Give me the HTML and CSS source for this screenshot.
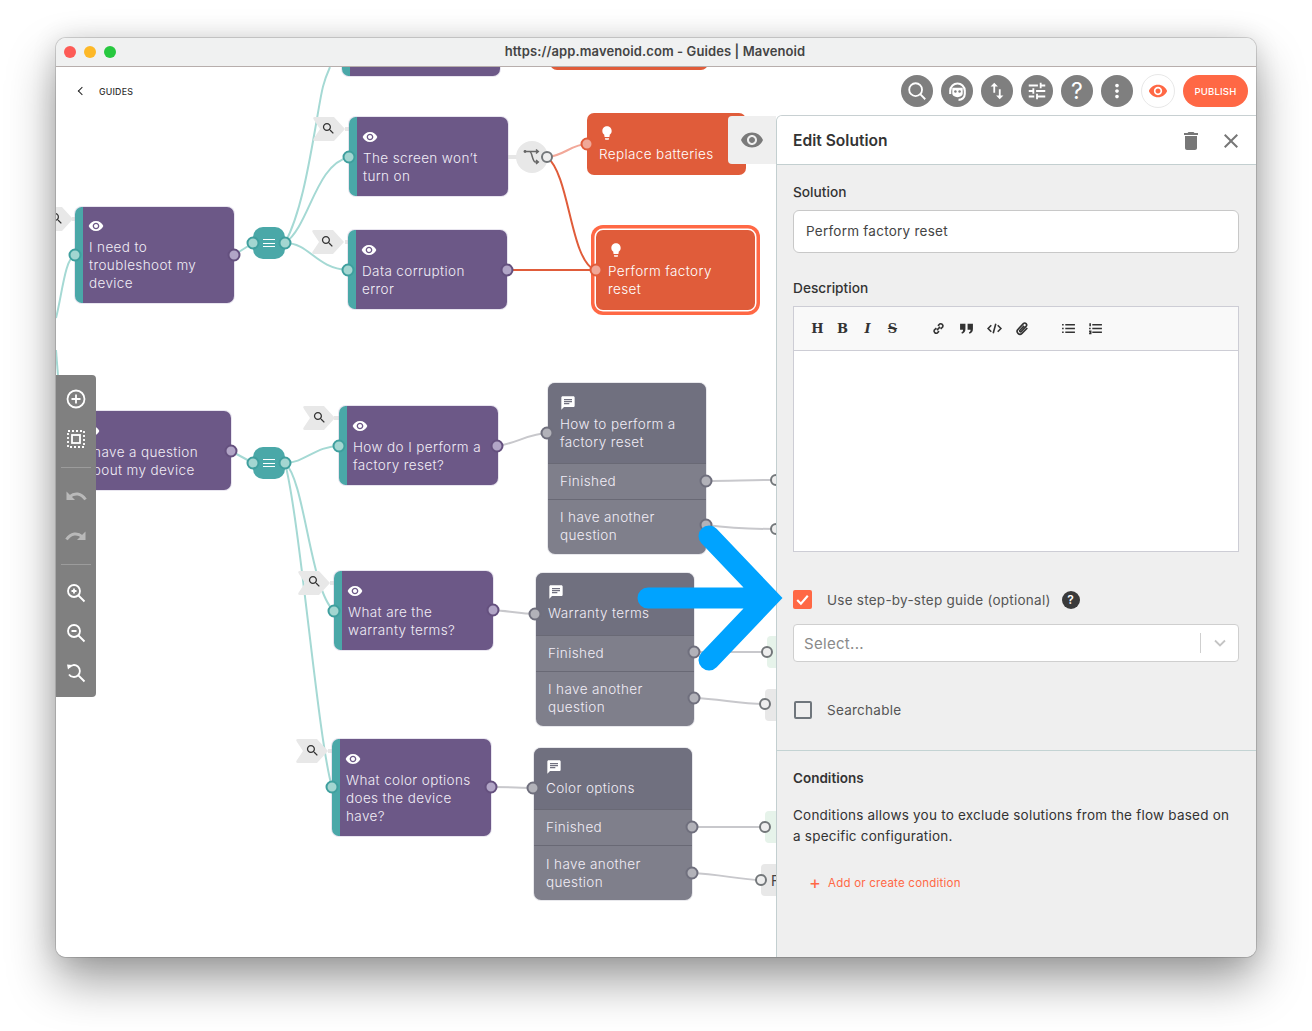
FILE: index.html
```html
<!DOCTYPE html>
<html lang="en">
<head>
<meta charset="utf-8">
<title>Guides | Mavenoid</title>
<link rel="stylesheet" href="styles.css">
</head>
<body>
<svg class="defs" width="0" height="0" aria-hidden="true">
  <symbol id="i-eye" viewBox="0 0 24 24"><path d="M12 4.5C7 4.5 2.73 7.61 1 12c1.73 4.39 6 7.5 11 7.5s9.27-3.11 11-7.5c-1.73-4.39-6-7.5-11-7.5zM12 17c-2.76 0-5-2.24-5-5s2.24-5 5-5 5 2.24 5 5-2.24 5-5 5zm0-8c-1.66 0-3 1.34-3 3s1.34 3 3 3 3-1.34 3-3-1.34-3-3-3z"/></symbol>
  <symbol id="i-bulb" viewBox="0 0 24 24"><path d="M9 21c0 .55.45 1 1 1h4c.55 0 1-.45 1-1v-1H9v1zm3-19C8.14 2 5 5.14 5 9c0 2.38 1.19 4.47 3 5.74V17c0 .55.45 1 1 1h6c.55 0 1-.45 1-1v-2.26c1.81-1.27 3-3.36 3-5.74 0-3.86-3.14-7-7-7z"/></symbol>
  <symbol id="i-chat" viewBox="0 0 24 24"><path d="M20 2H4c-1.1 0-1.99.9-1.99 2L2 22l4-4h14c1.1 0 2-.9 2-2V4c0-1.1-.9-2-2-2zM6 9h12v2H6V9zm8 5H6v-2h8v2zm4-6H6V6h12v2z"/></symbol>
  <symbol id="i-search" viewBox="0 0 24 24"><path d="M15.5 14h-.79l-.28-.27C15.41 12.59 16 11.11 16 9.5 16 5.91 13.09 3 9.5 3S3 5.91 3 9.5 5.91 16 9.5 16c1.61 0 3.09-.59 4.23-1.57l.27.28v.79l5 4.99L20.49 19l-4.99-5zm-6 0C7.01 14 5 11.99 5 9.5S7.01 5 9.5 5 14 7.01 14 9.5 11.99 14 9.5 14z"/></symbol>
  <symbol id="i-tag" viewBox="0 0 32 24"><path d="M2 0H21L32 12L21 24H2Q-1 24 1 21L7 12L1 3Q-1 0 2 0Z"/></symbol>
</svg>

<div class="window">
  <header class="titlebar">
    <div class="lights"><span class="light red"></span><span class="light amber"></span><span class="light green"></span></div>
    <div class="title">https://app.mavenoid.com - Guides | Mavenoid</div>
  </header>

  <div class="main">
    <section class="canvas">
      <svg class="layer" viewBox="56 67 720 890" width="720" height="890" aria-hidden="true">
        <g class="edge-teal">
          <path d="M285 243C300 215 308 170 315 130S322 85 330 67"/>
          <path d="M285 243C310 225 315 165 349 157"/>
          <path d="M285 243C310 243 315 268 348 270"/>
          <path d="M234 255L253 243"/>
          <path d="M75 255C65 258 62 295 56 318"/>
          <path d="M58 376L56 350"/>
          <path d="M231 451L253 463"/>
          <path d="M285 463C305 463 315 446 340 446"/>
          <path d="M285 463C305 480 310 590 334 611"/>
          <path d="M285 463C300 520 318 740 332 787"/>
        </g>
        <g class="edge-grey">
          <path d="M497 446C515 444 530 433 548 433"/>
          <path d="M493 610C510 611 520 614 536 614"/>
          <path d="M491 787C510 787 520 788 534 788"/>
          <path d="M706 481C730 481 750 480 776 480"/>
          <path d="M706 525C730 528 750 529 776 529"/>
          <path d="M694 652L767 652"/>
          <path d="M694 698C720 699 740 704 765 704"/>
          <path d="M692 827L765 827"/>
          <path d="M692 873C720 874 740 880 761 880"/>
          <path class="thick" d="M506 157L520 157"/>
        </g>
        <path class="edge-salmon" d="M547 157C562 157 572 144 587 144"/>
        <path class="edge-orange" d="M547 157C570 175 570 260 595 270"/>
        <path class="edge-orange" d="M507 270L595 270"/>
        <g class="tag-line">
          <path d="M72 219H75M345 129H349M345 242H348M334 418H339M330 583H334M328 751H332"/>
        </g>
        <g class="tag">
          <use href="#i-tag" x="41" y="207" width="32" height="24"/>
          <use href="#i-tag" x="313" y="117" width="32" height="24"/>
          <use href="#i-tag" x="312" y="230" width="32" height="24"/>
          <use href="#i-tag" x="303" y="406" width="32" height="24"/>
          <use href="#i-tag" x="298" y="571" width="32" height="24"/>
          <use href="#i-tag" x="296" y="739" width="32" height="24"/>
        </g>
        <g class="tag-icon">
          <use href="#i-search" x="49" y="211" width="15" height="15"/>
          <use href="#i-search" x="321" y="121" width="15" height="15"/>
          <use href="#i-search" x="320" y="234" width="15" height="15"/>
          <use href="#i-search" x="312" y="410" width="15" height="15"/>
          <use href="#i-search" x="307" y="574" width="15" height="15"/>
          <use href="#i-search" x="305" y="743" width="15" height="15"/>
        </g>
        <circle class="switch-bg" cx="532" cy="157" r="16"/>
        <g class="switch-icon">
          <path d="M525 151.500H529.500C532.500 151.500 532 162 535.500 162H538M529.500 151.500H538M536 149.500L538.300 151.500L536 153.500M536 160L538.300 162L536 164"/>
          <circle cx="525" cy="151.500" r="1.400"/>
        </g>
        <rect class="stub-green" x="767" y="636" width="12" height="32" rx="4"/>
        <rect class="stub-grey" x="765" y="689" width="14" height="32" rx="4"/>
        <rect class="stub-green" x="765" y="811" width="14" height="32" rx="4"/>
        <rect class="stub-grey" x="761" y="864" width="18" height="32" rx="4"/>
      </svg>

      <div class="stub-letter">F</div>

      <div class="node purple frag-top"></div>
      <div class="node orange frag-orange"></div>

      <article class="node purple n-a"><svg class="ico"><use href="#i-eye"/></svg><p>I need to troubleshoot my device</p></article>
      <article class="node purple n-b"><svg class="ico"><use href="#i-eye"/></svg><p>The screen won’t turn on</p></article>
      <article class="node purple n-c"><svg class="ico"><use href="#i-eye"/></svg><p>Data corruption error</p></article>
      <article class="node purple n-d"><svg class="ico"><use href="#i-eye"/></svg><p>I have a question about my device</p></article>
      <article class="node purple n-e"><svg class="ico"><use href="#i-eye"/></svg><p>How do I perform a factory reset?</p></article>
      <article class="node purple n-f"><svg class="ico"><use href="#i-eye"/></svg><p>What are the warranty terms?</p></article>
      <article class="node purple n-g"><svg class="ico"><use href="#i-eye"/></svg><p>What color options does the device have?</p></article>

      <article class="node orange n-replace"><svg class="ico"><use href="#i-bulb"/></svg><p>Replace batteries</p></article>
      <article class="node orange n-reset"><svg class="ico"><use href="#i-bulb"/></svg><p>Perform factory reset</p></article>

      <article class="node grey n-h">
        <div class="g-head"><svg class="ico"><use href="#i-chat"/></svg><p>How to perform a factory reset</p></div>
        <div class="g-row">Finished</div>
        <div class="g-row tall">I have another question</div>
      </article>
      <article class="node grey n-i">
        <div class="g-head"><svg class="ico"><use href="#i-chat"/></svg><p>Warranty terms</p></div>
        <div class="g-row">Finished</div>
        <div class="g-row tall">I have another question</div>
      </article>
      <article class="node grey n-j">
        <div class="g-head"><svg class="ico"><use href="#i-chat"/></svg><p>Color options</p></div>
        <div class="g-row">Finished</div>
        <div class="g-row tall">I have another question</div>
      </article>

      <div class="hub h-1"><span class="bars"></span></div>
      <div class="hub h-2"><span class="bars"></span></div>

      <svg class="layer" viewBox="56 67 720 890" width="720" height="890" aria-hidden="true">
        <g class="p-teal">
          <circle cx="75" cy="255" r="5.500"/><circle cx="349" cy="157" r="5.500"/><circle cx="348" cy="270" r="5.500"/>
          <circle cx="253" cy="243" r="5.500"/><circle cx="285" cy="243" r="5.500"/>
          <circle cx="253" cy="463" r="5.500"/><circle cx="285" cy="463" r="5.500"/>
          <circle cx="339" cy="446" r="5.500"/><circle cx="334" cy="611" r="5.500"/><circle cx="332" cy="787" r="5.500"/>
        </g>
        <g class="p-purple">
          <circle cx="234" cy="255" r="5.500"/><circle cx="507" cy="270" r="5.500"/>
          <circle cx="231" cy="451" r="5.500"/><circle cx="497" cy="446" r="5.500"/><circle cx="493" cy="610" r="5.500"/><circle cx="491" cy="787" r="5.500"/>
        </g>
        <g class="p-grey">
          <circle cx="547" cy="433" r="5.500"/><circle cx="706" cy="481" r="5.500"/><circle cx="706" cy="525" r="5.500"/>
          <circle cx="535" cy="614" r="5.500"/><circle cx="694" cy="652" r="5.500"/><circle cx="694" cy="698" r="5.500"/>
          <circle cx="533" cy="788" r="5.500"/><circle cx="692" cy="827" r="5.500"/><circle cx="692" cy="873" r="5.500"/>
        </g>
        <g class="p-orange">
          <circle cx="587" cy="144" r="5.500"/><circle cx="596" cy="270" r="5.500"/>
        </g>
        <g class="p-ring">
          <circle cx="547" cy="157" r="5"/><circle cx="767" cy="652" r="5"/><circle cx="765" cy="704" r="5"/>
          <circle cx="765" cy="827" r="5"/><circle cx="761" cy="880" r="5"/><circle cx="776" cy="480" r="5"/><circle cx="776" cy="529" r="5"/>
        </g>
      </svg>

      <div class="guides"><span class="back"></span><span>GUIDES</span></div>

      <div class="preview-tab"><svg><use href="#i-eye"/></svg></div>

      <nav class="tools">
        <svg viewBox="0 0 24 24"><circle cx="12" cy="12" r="8.500"/><path d="M12 7.500v9M7.500 12h9"/></svg>
        <svg viewBox="0 0 24 24"><rect x="4" y="4" width="16" height="16" stroke-dasharray="2 2"/><rect x="8" y="8" width="8" height="8"/></svg>
        <hr>
        <svg class="dim" viewBox="0 0 24 24"><path class="solid" d="M2.500 7.500V16H11Z"/><path class="wide" d="M6 12.500C10.500 8.500 17 9 21.500 15.500"/></svg>
        <svg class="dim" viewBox="0 0 24 24"><path class="solid" d="M21.500 7.500V16H13Z"/><path class="wide" d="M18 12.500C13.500 8.500 7 9 2.500 15.500"/></svg>
        <hr>
        <svg viewBox="0 0 24 24"><circle cx="10" cy="10" r="6"/><path d="M14.500 14.500L20.500 20.500M7.500 10h5M10 7.500v5"/></svg>
        <svg viewBox="0 0 24 24"><circle cx="10" cy="10" r="6"/><path d="M14.500 14.500L20.500 20.500M7.500 10h5"/></svg>
        <svg viewBox="0 0 24 24"><path d="M5 6.500A6 6 0 1 1 5 13.500M14.500 14.500L20.500 20.500"/><path class="solid" d="M3 3.500L8.500 4L4 8.500Z"/></svg>
      </nav>
    </section>

    <aside class="side">
      <div class="topbar">
        <button class="round"><svg viewBox="0 0 24 24"><circle class="st" cx="10.500" cy="10.500" r="7"/><path class="st" d="M15.500 15.500L21 21"/></svg></button>
        <button class="round head"><svg viewBox="0 0 24 24"><path class="st" d="M5 11.500C5 2 19 2 19 11.500M5 10.500v4M19 10.500v4C19 18 16 20 13 20"/><path class="fillw" d="M7 8.500h10v5.500c0 2-2 3.500-5 3.500s-5-1.500-5-3.500z"/><circle class="dark" cx="10" cy="12" r="1.200"/><circle class="dark" cx="14" cy="12" r="1.200"/></svg></button>
        <button class="round"><svg viewBox="0 0 24 24"><path class="fillw" d="M16 17.010V10h-2v7.010h-3L15 21l4-3.990h-3zM9 3L5 6.990h3V14h2V6.990h3L9 3z"/></svg></button>
        <button class="round"><svg viewBox="0 0 24 24"><path class="fillw" d="M3 17v2h6v-2H3zM3 5v2h10V5H3zm10 16v-2h8v-2h-8v-2h-2v6h2zM7 9v2H3v2h4v2h2V9H7zm14 4v-2H11v2h10zm-6-4h2V7h4V5h-4V3h-2v6z"/></svg></button>
        <button class="round q">?</button>
        <button class="round"><svg viewBox="0 0 24 24"><path class="fillw" d="M12 8c1.100 0 2-.9 2-2s-.9-2-2-2-2 .9-2 2 .9 2 2 2zm0 2c-1.100 0-2 .9-2 2s.9 2 2 2 2-.9 2-2-.9-2-2-2zm0 6c-1.100 0-2 .9-2 2s.9 2 2 2 2-.9 2-2-.9-2-2-2z"/></svg></button>
        <button class="round live"><svg><use href="#i-eye"/></svg></button>
        <button class="publish">PUBLISH</button>
      </div>

      <div class="panel">
        <div class="panel-head">
          <h2>Edit Solution</h2>
          <svg class="trash" viewBox="0 0 24 24"><path d="M6 19c0 1.100.9 2 2 2h8c1.100 0 2-.9 2-2V7H6v12zM19 4h-3.500l-1-1h-5l-1 1H5v2h14V4z"/></svg>
          <svg class="close" viewBox="0 0 24 24"><path d="M19 6.410L17.590 5 12 10.590 6.410 5 5 6.410 10.590 12 5 17.590 6.410 19 12 13.410 17.590 19 19 17.590 13.410 12z"/></svg>
        </div>

        <div class="form">
          <label class="lbl">Solution</label>
          <div class="input">Perform factory reset</div>

          <label class="lbl lbl-desc">Description</label>
          <div class="editor">
            <div class="ed-tools">
              <div class="ed-group g1"><b class="slab">H</b><b class="slab">B</b><i class="slab">I</i><s class="slab">S</s></div>
              <div class="ed-group g2">
                <svg viewBox="0 0 14 14"><path class="ln" d="M5.500 8.500L8.500 5.500M5 6.500L3 8.500A2.100 2.100 0 0 0 5.800 11.200L7.500 9.500M9 7.500L11 5.500A2.100 2.100 0 0 0 8.200 2.800L6.500 4.500"/></svg>
                <svg viewBox="0 0 14 14"><path d="M1 2.500H6V7.500C6 9.800 5 11.300 2.800 12L2.200 10.800C3.300 10.300 3.800 9.500 3.800 8.200H1ZM8 2.500H13V7.500C13 9.800 12 11.300 9.800 12L9.200 10.800C10.300 10.300 10.800 9.500 10.800 8.200H8Z"/></svg>
                <svg viewBox="0 0 14 14"><path class="ln" d="M4 4L1 7L4 10M10 4L13 7L10 10M8.200 2.500L5.800 11.500"/></svg>
                <svg viewBox="0 0 14 14"><path class="ln" d="M11.500 6.500L6.500 11.500A2.500 2.500 0 0 1 2.800 7.800L7.800 2.500A1.700 1.700 0 0 1 10.300 5L5.800 9.800A.8.800 0 0 1 4.600 8.600L8.500 4.500"/></svg>
              </div>
              <div class="ed-group g3">
                <svg viewBox="0 0 14 14"><path class="ln" d="M4 3.500H13M4 7H13M4 10.500H13M1 3.500H2.500M1 7H2.500M1 10.500H2.500"/></svg>
                <svg viewBox="0 0 14 14"><path class="ln" d="M4 3.500H13M4 7H13M4 10.500H13M2 2V5M1 7H2.500M1 9.500H2.500V11.500H1"/></svg>
              </div>
            </div>
            <div class="ed-body"></div>
          </div>

          <div class="check-row first">
            <span class="box on"><svg viewBox="0 0 18 18"><path d="M4 9.500L7.500 13L14 5.500"/></svg></span>
            <span>Use step-by-step guide (optional)</span>
            <span class="help">?</span>
          </div>

          <div class="select">
            <span class="ph">Select...</span>
            <span class="sep"></span>
            <svg viewBox="0 0 14 14"><path d="M2 4.500L7 9.500L12 4.500"/></svg>
          </div>

          <div class="check-row second">
            <span class="box"></span>
            <span>Searchable</span>
          </div>
        </div>

        <div class="conditions">
          <h3>Conditions</h3>
          <p>Conditions allows you to exclude solutions from the flow based on a specific configuration.</p>
          <div class="add"><span class="plus">+</span>Add or create condition</div>
        </div>
      </div>
    </aside>

    <svg class="arrow" viewBox="0 0 1312 1031" width="1312" height="1031" aria-hidden="true">
      <path d="M648 598H760M709 536L768 598L709 660"/>
    </svg>
  </div>
</div>
</body>
</html>
```

FILE: styles.css
```css
* { box-sizing: border-box; }
html, body { margin: 0; height: 100%; }
body {
  background: #fff;
  font-family: Inter, "Noto Sans", sans-serif;
  color: #333;
  overflow: hidden;
  padding: 38px 56px 0;
}
.defs { position: absolute; }
p { margin: 0; }

.window {
  width: 1200px;
  height: 919px;
  border-radius: 10px;
  background: #fff;
  box-shadow: 0 24px 48px rgba(0,0,0,.38), 0 0 26px rgba(0,0,0,.12), 0 0 0 1px rgba(0,0,0,.14);
  display: flex;
  flex-direction: column;
  overflow: hidden;
  position: relative;
}

.titlebar {
  height: 29px;
  flex: none;
  background: #f0f1f1;
  border-bottom: 1px solid #b7aeac;
  position: relative;
  display: flex;
  align-items: center;
  justify-content: center;
  padding: 0 2px 2px 0;
}
.lights { position: absolute; left: 8px; top: 8px; display: flex; gap: 8px; }
.light { width: 12px; height: 12px; border-radius: 50%; }
.red { background: #fd5b56; }
.amber { background: #fdb827; }
.green { background: #27c83f; }
.title { font-size: 13px; font-weight: 600; letter-spacing: .1px; color: #444; }

.main { flex: 1; display: flex; position: relative; min-height: 0; }

.canvas { width: 720px; height: 890px; position: relative; overflow: hidden; flex: none; background: #fff; }
.layer { position: absolute; left: 0; top: 0; display: block; pointer-events: none; }

.edge-teal path { fill: none; stroke: #a5d9d4; stroke-width: 2; }
.edge-grey path { fill: none; stroke: #c8c8cc; stroke-width: 2; }
.edge-grey path.thick { stroke: #e6e6e6; stroke-width: 4; }
.edge-salmon { fill: none; stroke: #f2a899; stroke-width: 2; }
.edge-orange { fill: none; stroke: #e05c3a; stroke-width: 2; }
.tag-line path { fill: none; stroke: #e6e6e6; stroke-width: 4; }
.tag { fill: #e8e8e8; }
.tag-icon { fill: #333; }
.switch-bg { fill: #e8e8e8; }
.switch-icon path { fill: none; stroke: #666; stroke-width: 1.500; }
.switch-icon circle { fill: #666; }
.stub-green { fill: #e6f3ea; }
.stub-grey { fill: #e8e8e8; }
.stub-letter { position: absolute; left: 715px; top: 805px; font-size: 14px; color: #444; }

.p-teal circle { fill: #a3d6d1; stroke: #3f9f9e; stroke-width: 2; }
.p-purple circle { fill: #b1a5c6; stroke: #64507e; stroke-width: 2; }
.p-grey circle { fill: #b2b2b9; stroke: #6f6f7d; stroke-width: 2; }
.p-orange circle { fill: #f0a898; stroke: #e05c3a; stroke-width: 2; }
.p-ring circle { fill: #eee; stroke: #73777a; stroke-width: 2; }

.node {
  position: absolute;
  width: 159px;
  border-radius: 7px;
  font-size: 13.5px;
  font-weight: 300;
  line-height: 18px;
  letter-spacing: .38px;
  color: #f1edf6;
  overflow: hidden;
}
.node .ico { display: block; width: 16px; height: 16px; fill: currentColor; margin: -1px 0 4px; color: #fff; }
.purple .ico { margin-left: -1px; }

.purple { background: #6c5887; padding: 13px 10px 11px 6px; border-left: 8px solid #4aa8a8; box-shadow: 0 0 0 1px rgba(190,180,210,.35); }
.orange { background: #e05c3a; padding: 13px 12px 12px; color: #fff; }
.grey { background: #7f7f8b; padding: 0; width: 158px; box-shadow: 0 0 0 1px rgba(190,190,200,.35); }

.frag-top { left: 286px; top: -40px; width: 158px; height: 49px; }
.frag-orange { left: 494px; top: -40px; width: 158px; height: 43px; }
.n-a { left: 19px; top: 140px; height: 96px; padding-top: 12px; }
.n-b { left: 293px; top: 50px; }
.n-c { left: 292px; top: 163px; }
.n-d { left: 19px; top: 344px; width: 156px; padding-left: 2px; }
.n-e { left: 283px; top: 339px; }
.n-f { left: 278px; top: 504px; }
.n-g { left: 276px; top: 672px; height: 97px; }
.n-replace { left: 531px; top: 46px; }
.n-reset {
  left: 540px; top: 163px; overflow: visible;
  box-shadow: 0 0 0 1.5px #fff, 0 0 0 5px #ff6845;
}
.n-h { left: 492px; top: 316px; }
.n-h .g-head { padding: 13px 12px 12px; }
.n-i { left: 480px; top: 506px; }
.n-i .g-head { padding-bottom: 13px; }
.n-j { left: 478px; top: 681px; }
.n-j .g-row.tall { padding-top: 9px; }

.g-head { background: #70707f; padding: 12px 12px 12px; }
.g-row { padding: 8px 12px; height: 36px; border-top: 1px solid #696975; }
.g-row.tall { height: 55px; }

.hub { position: absolute; width: 32px; height: 32px; border-radius: 10px; background: #4aa8a8; display: flex; align-items: center; justify-content: center; }
.h-1 { left: 197px; top: 160px; }
.h-2 { left: 197px; top: 380px; }
.bars { width: 12px; height: 8px; border-top: 1px solid #fff; border-bottom: 1px solid #fff; position: relative; display: block; }
.bars::after { content: ""; position: absolute; left: 0; right: 0; top: 2.500px; height: 1px; background: #fff; }

.guides { position: absolute; left: 21px; top: 15px; height: 18px; display: flex; align-items: center; gap: 14px; font-size: 8.800px; font-weight: 500; letter-spacing: .2px; color: #333; }
.back { width: 6px; height: 6px; border-left: 1.500px solid #222; border-bottom: 1.500px solid #222; transform: rotate(45deg); margin-left: 2px; }

.preview-tab { position: absolute; left: 672px; top: 49px; width: 48px; height: 48px; background: #efefef; border-radius: 4px 0 0 4px; display: flex; align-items: center; justify-content: center; fill: #7a7a7a; }
.preview-tab svg { width: 24px; height: 24px; }

.tools { position: absolute; left: 0; top: 308px; width: 40px; height: 322px; background: #808080; border-radius: 0 4px 4px 0; display: flex; flex-direction: column; align-items: center; padding-top: 12px; }
.tools svg { width: 24px; height: 24px; margin-bottom: 16px; fill: none; stroke: #fff; stroke-width: 1.800; flex: none; }
.tools svg .solid { fill: #fff; stroke: none; }
.tools svg .wide { stroke-width: 3; }
.tools svg.dim { opacity: .45; }
.tools hr { width: 30px; margin: 0 0 16px; border: 0; border-top: 1px solid #9c9c9c; flex: none; }

.side { width: 480px; height: 890px; display: flex; flex-direction: column; flex: none; }
.topbar { height: 48px; flex: none; display: flex; align-items: center; justify-content: flex-end; gap: 8px; padding: 0 8px 0 0; }
.round { width: 32px; height: 32px; border-radius: 50%; background: #7f7f7f; border: 0; padding: 0; display: flex; align-items: center; justify-content: center; flex: none; }
.round svg { width: 22px; height: 22px; }
.head svg { width: 25px; height: 25px; }
.st { fill: none; stroke: #fff; stroke-width: 2; }
.fillw { fill: #fff; }
.dark { fill: #7f7f7f; }
.q { color: #fff; font: 400 23px/32px Inter, sans-serif; }
.live { width: 34px; height: 34px; background: #fff; border: 1px solid #e8e8e8; fill: #ff6845; }
.live svg { width: 20px; height: 20px; }
.publish { width: 65px; height: 32px; border: 0; border-radius: 16px; background: #ff6845; color: #fff; font: 500 9.500px Inter, sans-serif; letter-spacing: .2px; padding: 0; }

.panel { flex: 1; background: #efefef; border-left: 1px solid #c3cfd0; border-top: 1px solid #c8d0d2; border-top-left-radius: 6px; overflow: hidden; display: flex; flex-direction: column; }
.panel-head { height: 49px; background: #fff; border-bottom: 1px solid #c3cfd0; display: flex; align-items: center; padding: 1px 13px 0 16px; flex: none; }
.panel-head h2 { margin: 0; font-size: 15.600px; font-weight: 600; color: #333; flex: 1; }
.trash { width: 24px; height: 24px; fill: #777; margin-right: 16px; }
.close { width: 24px; height: 24px; fill: #777; }

.form { padding: 18px 17px 0 16px; height: 586px; border-bottom: 1px solid #c3d3d3; flex: none; }
.lbl { display: block; font-size: 13.700px; font-weight: 500; line-height: 18px; color: #333; }
.lbl-desc { margin-top: 26px; }
.input { height: 43px; margin-top: 9px; background: #fff; border: 1px solid #c8c8c8; border-radius: 6px; padding: 0 12px; font-size: 13.500px; line-height: 41px; letter-spacing: .25px; color: #444; }
.editor { margin-top: 9px; height: 246px; background: #fff; border: 1px solid #cdcdd5; }
.ed-tools { height: 44px; background: #f9f9f9; border-bottom: 1px solid #cdcdd5; display: flex; align-items: center; padding-left: 17px; }
.ed-group { display: flex; align-items: center; }
.ed-group svg { width: 15px; height: 15px; fill: #333; flex: none; }
.ln { fill: none; stroke: #333; stroke-width: 1.500; }
.slab { font: 700 13px/14px "DejaVu Serif", serif; color: #333; width: 13px; text-align: center; }
i.slab { font-style: italic; font-weight: 700; }
s.slab { font-weight: 700; }
.g1 { gap: 12px; }
.g2 { gap: 13px; margin-left: 32px; }
.g3 { gap: 12px; margin-left: 31px; }

.check-row { display: flex; align-items: center; font-size: 13.500px; letter-spacing: .25px; color: #555; }
.check-row.first { margin-top: 38px; height: 19px; }
.check-row.second { margin-top: 39px; height: 18px; padding-left: 1px; }
.box { width: 18px; height: 18px; border: 2px solid #6f767c; border-radius: 2px; margin-right: 15px; flex: none; }
.box.on { width: 19px; height: 19px; background: #ff6845; border: 0; margin-right: 15px; }
.box.on svg { display: block; width: 19px; height: 19px; fill: none; stroke: #fff; stroke-width: 2; }
.help { width: 18px; height: 18px; border-radius: 50%; background: #3a3a3a; color: #fff; margin-left: 11px; font-size: 12px; font-weight: 600; line-height: 18px; text-align: center; letter-spacing: 0; }
.select { margin-top: 15px; height: 38px; background: #fff; border: 1px solid #cfcfcf; border-radius: 4px; display: flex; align-items: center; padding: 0 11px 0 10px; }
.ph { flex: 1; font-size: 15px; letter-spacing: .3px; color: #8a8a8a; }
.sep { width: 1px; height: 20px; background: #cfcfcf; margin-right: 12px; }
.select svg { width: 14px; height: 14px; fill: none; stroke: #c4c4c4; stroke-width: 1.800; }

.conditions { padding: 18px 17px 0 16px; }
.conditions h3 { margin: 0; font-size: 13.500px; font-weight: 600; line-height: 18px; color: #333; }
.conditions p { margin-top: 18px; font-size: 13.500px; line-height: 21px; letter-spacing: .22px; color: #333; }
.add { margin-top: 28px; padding-left: 16px; font-size: 11.500px; line-height: 16px; letter-spacing: .22px; color: #ff6845; display: flex; align-items: center; }
.plus { font-size: 18px; width: 19px; }

.arrow { position: absolute; left: -56px; top: -67px; pointer-events: none; }
.arrow path { fill: none; stroke: #00a3ff; stroke-width: 21; stroke-linecap: round; stroke-linejoin: miter; }
```
